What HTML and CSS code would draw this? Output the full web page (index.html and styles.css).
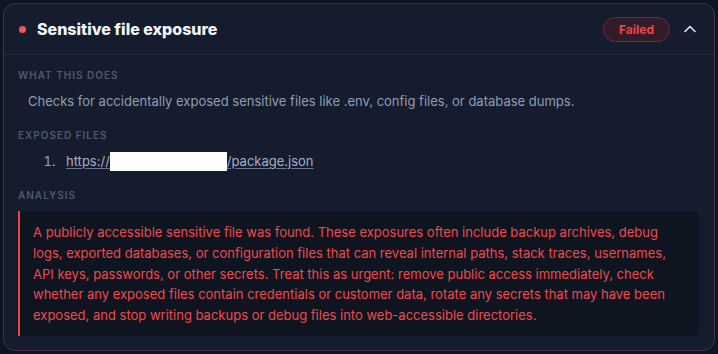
FILE: index.html
```html
<!DOCTYPE html>
<html lang="en">
<head>
<meta charset="utf-8">
<link rel="stylesheet" href="styles.css">
</head>
<body>
<section class="card">
  <header class="card-head">
    <span class="dot"></span>
    <h2 class="title">Sensitive file exposure</h2>
    <span class="badge">Failed</span>
    <svg class="chev" width="12" height="8" viewBox="0 0 12 8"><path d="M1 6.5 L6 1.5 L11 6.5" fill="none" stroke="#e2e8f0" stroke-width="1.6" stroke-linecap="round" stroke-linejoin="round"/></svg>
  </header>
  <div class="card-body">
    <div class="label">What this does</div>
    <p class="desc">Checks for accidentally exposed sensitive files like .env, config files, or database dumps.</p>
    <div class="label">Exposed files</div>
    <ol class="files">
      <li><a class="link">https://<span class="redact"></span>/package.json</a></li>
    </ol>
    <div class="label">Analysis</div>
    <div class="analysis">A publicly accessible sensitive file was found. These exposures often include backup archives, debug logs, exported databases, or configuration files that can reveal internal paths, stack traces, usernames, API keys, passwords, or other secrets. Treat this as urgent: remove public access immediately, check whether any exposed files contain credentials or customer data, rotate any secrets that may have been exposed, and stop writing backups or debug files into web-accessible directories.</div>
  </div>
</section>
</body>
</html>
```
FILE: styles.css
```css
html, body { margin: 0; padding: 0; }
body {
  background: #0e1422;
  padding: 3px;
  font-family: Inter, "Noto Sans", sans-serif;
  width: 712px;
  box-sizing: content-box;
}
.card {
  background: #151c2e;
  border: 1px solid #46303f;
  border-radius: 12px;
  overflow: hidden;
  height: 348px;
  box-sizing: border-box;
}
.card-head {
  display: flex;
  align-items: center;
  height: 50px;
  padding: 0 18px 0 15px;
  border-bottom: 1px solid #222b3d;
}
.dot {
  width: 7px; height: 7px; border-radius: 50%;
  background: #f25555;
  margin-right: 11px;
}
.title {
  margin: 0;
  font-size: 16px;
  font-weight: 800;
  color: #f1f5f9;
  flex: 1;
}
.badge {
  display: inline-flex;
  align-items: center;
  justify-content: center;
  height: 25px;
  width: 67px;
  box-sizing: border-box;
  border-radius: 13px;
  background: #331c2a;
  border: 1px solid #6b2c3c;
  color: #ef4444;
  font-size: 12px;
  font-weight: 700;
  margin-right: 14px;
}
.chev { display: block; }
.card-body {
  padding: 13px 14px 0 14px;
}
.label {
  font-size: 10px;
  font-weight: 600;
  letter-spacing: 0.1em;
  text-transform: uppercase;
  color: #4f5a6f;
  line-height: 14px;
}
.desc {
  margin: 10px 0 18px 10px;
  font-size: 13px;
  line-height: 18px;
  color: #909db3;
}
.files {
  margin: 10px 0 17px 0;
  padding-left: 41px;
  font-size: 13px;
  line-height: 18px;
  color: #96a3b8;
}
.files li { padding-left: 7px; }
.link {
  color: #a3b0c4;
  text-decoration: underline;
  text-underline-offset: 2px;
  text-decoration-color: #6b778c;
}
.redact {
  display: inline-block;
  width: 117px;
  height: 19px;
  background: #ffffff;
  vertical-align: -5px;
}
.analysis {
  margin-top: 9px;
  background: #0f1421;
  border-left: 2px solid #ef4444;
  border-radius: 0 6px 6px 0;
  padding: 11px 14px 10px 13px;
  font-size: 13px;
  line-height: 20.8px;
  color: #ef4a4a;
  margin-right: 1px;
}
```
